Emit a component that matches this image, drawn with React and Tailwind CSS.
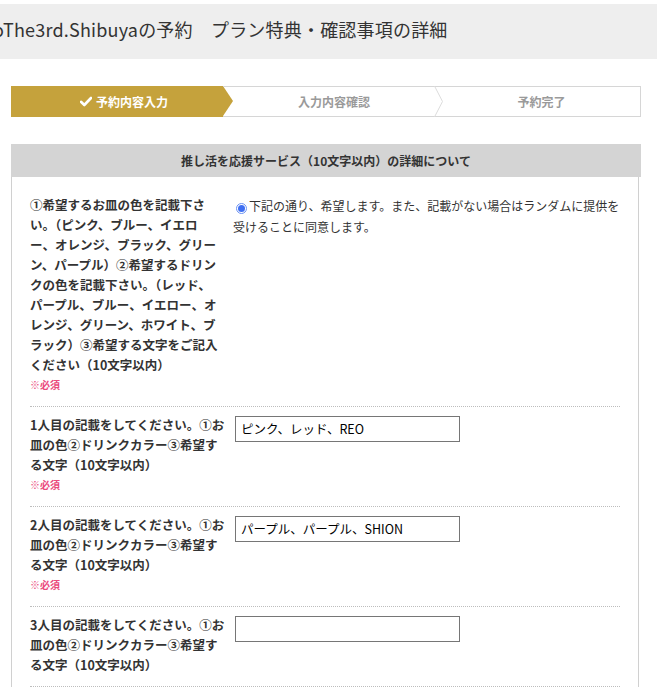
import React from 'react';

const FONT = { fontFamily: '"Noto Sans CJK JP", "Noto Sans", sans-serif' };

const GOLD = '#c5a23c';

// 各行のラベル（改行位置は元画面に合わせる）
const ROWS = [
  {
    lines: [
      '①希望するお皿の色を記載下さ',
      'い。（ピンク、ブルー、イエロ',
      'ー、オレンジ、ブラック、グリー',
      'ン、パープル）②希望するドリン',
      'クの色を記載下さい。（レッド、',
      'パープル、ブルー、イエロー、オ',
      'レンジ、グリーン、ホワイト、ブ',
      'ラック）③希望する文字をご記入',
      'ください（10文字以内）',
    ],
    required: true,
    kind: 'radio',
  },
  { lines: ['1人目の記載をしてください。①お', '皿の色②ドリンクカラー③希望す', 'る文字（10文字以内）'], required: true, kind: 'input', value: 'ピンク、レッド、REO' },
  { lines: ['2人目の記載をしてください。①お', '皿の色②ドリンクカラー③希望す', 'る文字（10文字以内）'], required: true, kind: 'input', value: 'パープル、パープル、SHION' },
  { lines: ['3人目の記載をしてください。①お', '皿の色②ドリンクカラー③希望す', 'る文字（10文字以内）'], required: false, kind: 'input', value: '' },
];

function Steps() {
  return (
    <div className="flex h-[31px] w-[630px] text-[12px] font-bold">
      <div className="relative flex w-[212px] items-center justify-center pl-[14px] text-white" style={{ backgroundColor: GOLD }}>
        <svg className="mr-[4px]" width="12" height="11" viewBox="0 0 12 11">
          <path d="M1 5.8 L4.3 9 L11 2" fill="none" stroke="#fff" strokeWidth="2.6" strokeLinecap="round" strokeLinejoin="round" />
        </svg>
        予約内容入力
        <span className="absolute right-[-10px] top-0 h-0 w-0 border-y-[15.5px] border-l-[10px] border-y-transparent" style={{ borderLeftColor: GOLD }} />
      </div>
      <div className="relative flex w-[212px] items-center justify-center border-y border-[#d6d6d6] pl-[10px] text-[#9a9a9a]">
        入力内容確認
        <svg className="absolute right-[-9px] top-[-1px]" width="10" height="31" viewBox="0 0 10 31">
          <polyline points="0.5,0 8.5,15.5 0.5,31" fill="none" stroke="#dcdcdc" strokeWidth="1" />
        </svg>
      </div>
      <div className="flex flex-1 items-center justify-center border-y border-r border-[#d6d6d6] pl-[8px] text-[#9a9a9a]">
        予約完了
      </div>
    </div>
  );
}

function Row({ row }) {
  return (
    <div className="flex border-b border-dotted border-[#bdbdbd] pb-[11px] pt-[8px]">
      <div className="w-[203px] shrink-0 text-[12.5px] font-bold leading-[20px] text-[#333]">
        {row.lines.map((l) => (
          <div key={l} className="whitespace-nowrap">{l}</div>
        ))}
        {row.required && <div className="text-[10px] leading-[20px] text-[#ea4b7c]">※必須</div>}
      </div>
      <div className="flex-1">
        {row.kind === 'radio' ? (
          <p className="whitespace-nowrap text-[12px] leading-[21px] text-[#333]">
            <span className="ml-[3px] mr-[2px] inline-flex h-[11px] w-[11px] translate-y-[1px] items-center justify-center rounded-full border border-[#6b92f3] bg-white align-baseline">
              <span className="h-[7px] w-[7px] rounded-full bg-[#3f6ff2]" />
            </span>
            下記の通り、希望します。また、記載がない場合はランダムに提供を
            <br />
            受けることに同意します。
          </p>
        ) : (
          <div className="ml-[2px] mt-[1px] flex h-[26px] w-[225px] items-center border border-[#767676] bg-white pl-[5px] text-[12.5px] text-black">
            {row.value}
          </div>
        )}
      </div>
    </div>
  );
}

export default function App() {
  return (
    <div className="min-h-screen overflow-hidden bg-white pt-[4px]" style={FONT}>
      <div className="flex h-[55px] items-center overflow-hidden bg-[#eeeeee] pb-[5px]">
        <h1 className="-ml-[7px] whitespace-nowrap text-[18px] font-normal tracking-[0.2px] text-[#333]">
          oThe3rd.Shibuyaの予約　プラン特典・確認事項の詳細
        </h1>
      </div>

      <div className="px-[11px] pt-[27px]">
        <Steps />

        <div className="mt-[27px] w-[630px]">
          <div className="flex h-[33px] items-center justify-center bg-[#d4d4d4] text-[12px] font-bold text-[#333]">
            推し活を応援サービス（10文字以内）の詳細について
          </div>
          <div className="mr-[2px] border-x border-[#d0d0d0] px-[18px] pt-[10px]">
            {ROWS.map((r, i) => (
              <Row key={i} row={r} />
            ))}
          </div>
        </div>
      </div>
    </div>
  );
}
